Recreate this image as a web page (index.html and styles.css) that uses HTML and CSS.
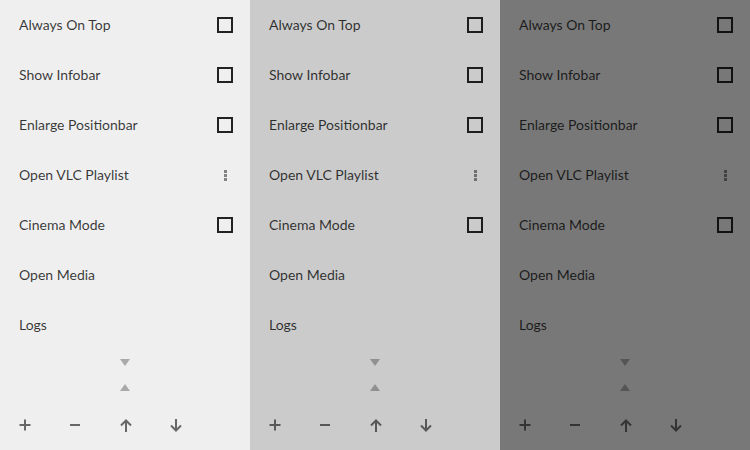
FILE: index.html
```html
<!DOCTYPE html>
<html>
<head>
<meta charset="utf-8">
<link rel="stylesheet" href="styles.css">
</head>
<body>
<div class="screen">
  <section class="panel light">
    <div class="row"><span class="label">Always On Top</span><span class="check"></span></div>
    <div class="row"><span class="label">Show Infobar</span><span class="check"></span></div>
    <div class="row"><span class="label">Enlarge Positionbar</span><span class="check"></span></div>
    <div class="row"><span class="label">Open VLC Playlist</span><span class="kebab"><i></i><i></i><i></i></span></div>
    <div class="row"><span class="label">Cinema Mode</span><span class="check"></span></div>
    <div class="row"><span class="label">Open Media</span></div>
    <div class="row"><span class="label">Logs</span></div>
    <div class="tris"><span class="tri down"></span><span class="tri up"></span></div>
    <div class="toolbar">
      <span class="tool"><svg width="12" height="12" viewBox="0 0 12 12"><path d="M6 0.5V11.5M0.5 6H11.5" stroke="currentColor" stroke-width="2" fill="none"/></svg></span>
      <span class="tool"><svg width="12" height="12" viewBox="0 0 12 12"><path d="M1 6H11" stroke="currentColor" stroke-width="2" fill="none"/></svg></span>
      <span class="tool arrow"><svg width="12" height="13" viewBox="0 0 12 13"><path d="M6 13V1.5M1 6.5L6 1.5L11 6.5" stroke="currentColor" stroke-width="2" fill="none"/></svg></span>
      <span class="tool arrow"><svg width="12" height="13" viewBox="0 0 12 13"><path d="M6 0V11.5M1 6.5L6 11.5L11 6.5" stroke="currentColor" stroke-width="2" fill="none"/></svg></span>
    </div>
  </section>
  <section class="panel mid">
    <div class="row"><span class="label">Always On Top</span><span class="check"></span></div>
    <div class="row"><span class="label">Show Infobar</span><span class="check"></span></div>
    <div class="row"><span class="label">Enlarge Positionbar</span><span class="check"></span></div>
    <div class="row"><span class="label">Open VLC Playlist</span><span class="kebab"><i></i><i></i><i></i></span></div>
    <div class="row"><span class="label">Cinema Mode</span><span class="check"></span></div>
    <div class="row"><span class="label">Open Media</span></div>
    <div class="row"><span class="label">Logs</span></div>
    <div class="tris"><span class="tri down"></span><span class="tri up"></span></div>
    <div class="toolbar">
      <span class="tool"><svg width="12" height="12" viewBox="0 0 12 12"><path d="M6 0.5V11.5M0.5 6H11.5" stroke="currentColor" stroke-width="2" fill="none"/></svg></span>
      <span class="tool"><svg width="12" height="12" viewBox="0 0 12 12"><path d="M1 6H11" stroke="currentColor" stroke-width="2" fill="none"/></svg></span>
      <span class="tool arrow"><svg width="12" height="13" viewBox="0 0 12 13"><path d="M6 13V1.5M1 6.5L6 1.5L11 6.5" stroke="currentColor" stroke-width="2" fill="none"/></svg></span>
      <span class="tool arrow"><svg width="12" height="13" viewBox="0 0 12 13"><path d="M6 0V11.5M1 6.5L6 11.5L11 6.5" stroke="currentColor" stroke-width="2" fill="none"/></svg></span>
    </div>
  </section>
  <section class="panel dark">
    <div class="row"><span class="label">Always On Top</span><span class="check"></span></div>
    <div class="row"><span class="label">Show Infobar</span><span class="check"></span></div>
    <div class="row"><span class="label">Enlarge Positionbar</span><span class="check"></span></div>
    <div class="row"><span class="label">Open VLC Playlist</span><span class="kebab"><i></i><i></i><i></i></span></div>
    <div class="row"><span class="label">Cinema Mode</span><span class="check"></span></div>
    <div class="row"><span class="label">Open Media</span></div>
    <div class="row"><span class="label">Logs</span></div>
    <div class="tris"><span class="tri down"></span><span class="tri up"></span></div>
    <div class="toolbar">
      <span class="tool"><svg width="12" height="12" viewBox="0 0 12 12"><path d="M6 0.5V11.5M0.5 6H11.5" stroke="currentColor" stroke-width="2" fill="none"/></svg></span>
      <span class="tool"><svg width="12" height="12" viewBox="0 0 12 12"><path d="M1 6H11" stroke="currentColor" stroke-width="2" fill="none"/></svg></span>
      <span class="tool arrow"><svg width="12" height="13" viewBox="0 0 12 13"><path d="M6 13V1.5M1 6.5L6 1.5L11 6.5" stroke="currentColor" stroke-width="2" fill="none"/></svg></span>
      <span class="tool arrow"><svg width="12" height="13" viewBox="0 0 12 13"><path d="M6 0V11.5M1 6.5L6 11.5L11 6.5" stroke="currentColor" stroke-width="2" fill="none"/></svg></span>
    </div>
  </section>
</div>
</body>
</html>
```

FILE: styles.css
```css
html, body {
  margin: 0;
  padding: 0;
}
body {
  width: 750px;
  height: 450px;
  overflow: hidden;
  font-family: "Lato", "Open Sans", sans-serif;
  font-size: 14px;
}
.screen {
  display: flex;
  height: 450px;
}
.panel {
  width: 250px;
  height: 450px;
  display: flex;
  flex-direction: column;
}
.light { background: #efefef; }
.mid { background: #cbcbcb; }
.dark { background: #787878; }

.row {
  height: 50px;
  display: flex;
  align-items: center;
  justify-content: space-between;
  padding: 0 17px 0 19px;
  box-sizing: border-box;
}
.label {
  color: rgba(0, 0, 0, 0.78);
  padding-bottom: 2px;
}
.check {
  width: 16px;
  height: 16px;
  box-sizing: border-box;
  border: 2px solid rgba(0, 0, 0, 0.86);
}
.kebab {
  width: 16px;
  height: 16px;
  display: flex;
  flex-direction: column;
  align-items: center;
  justify-content: center;
  gap: 1px;
}
.kebab i {
  width: 3px;
  height: 3px;
  background: rgba(0, 0, 0, 0.45);
}
.tris {
  height: 50px;
  display: flex;
  flex-direction: column;
  align-items: center;
  padding-right: 1px;
}
.tri {
  height: 25px;
  display: flex;
  align-items: center;
  justify-content: center;
}
.tri::before {
  content: "";
  width: 0;
  height: 0;
  border-left: 5px solid transparent;
  border-right: 5px solid transparent;
}
.tri.down::before {
  border-top: 7px solid rgba(0, 0, 0, 0.29);
}
.tri.up::before {
  border-bottom: 7px solid rgba(0, 0, 0, 0.29);
}
.toolbar {
  height: 50px;
  display: flex;
  align-items: center;
  color: rgba(0, 0, 0, 0.57);
}
.tool {
  width: 50px;
  height: 50px;
  display: flex;
  align-items: center;
  justify-content: center;
}
.tool.arrow {
  padding-left: 2px;
  box-sizing: border-box;
}
.tool svg {
  display: block;
}
```
